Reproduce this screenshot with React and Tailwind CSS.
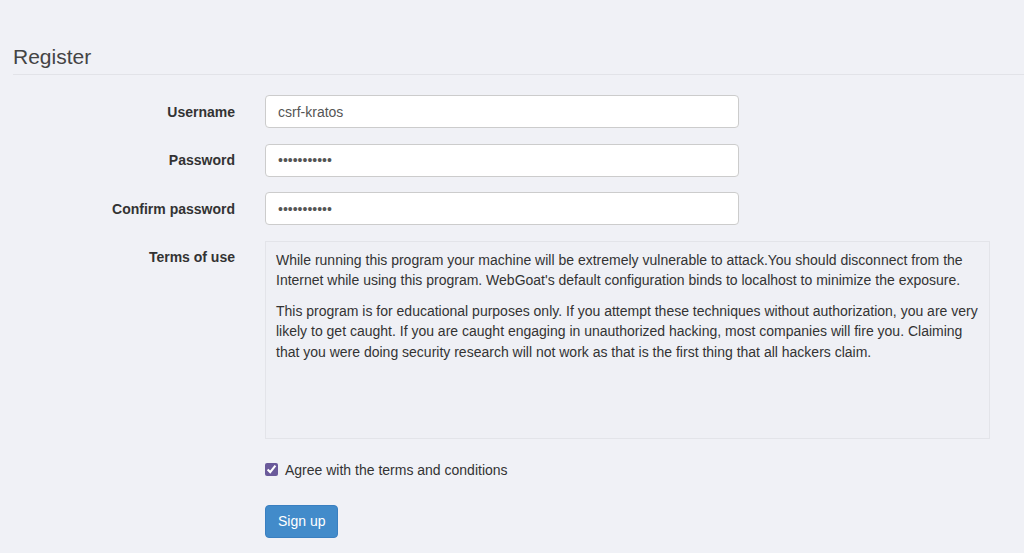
import React from "react";

const Row = ({ label, children, top = false }) => (
  <div className={`flex ${top ? "items-start" : "items-center"} mb-[15.5px]`}>
    <label
      className={`w-[235px] shrink-0 text-right font-bold text-sm text-[#333] ${top ? "pt-[6px]" : ""}`}
    >
      {label}
    </label>
    <div className="ml-[30px]">{children}</div>
  </div>
);

const inputCls =
  "w-[474px] h-[33px] px-3 bg-white border border-[#ccc] rounded text-sm text-[#555] outline-none";

export default function App() {
  return (
    <div
      className="min-h-screen bg-[#f0f1f6] text-[#333] pt-[44px]"
      style={{ fontFamily: '"Liberation Sans", Arial, sans-serif' }}
    >
      <div className="ml-[13px]">
        <h2 className="text-[21px] text-[#444] leading-[26px] pb-[4px] border-b border-[#e2e3e8]">
          Register
        </h2>
      </div>

      <form className="mt-[20px]" onSubmit={(e) => e.preventDefault()}>
        <Row label="Username">
          <input className={inputCls} defaultValue="csrf-kratos" />
        </Row>
        <Row label="Password">
          <input className={inputCls} type="password" defaultValue="kratos12345" />
        </Row>
        <Row label="Confirm password">
          <input className={inputCls} type="password" defaultValue="kratos12345" />
        </Row>
        <Row label="Terms of use" top>
          <div className="w-[725px] h-[198px] border border-[#e3e4e9] bg-[#eff0f5] px-[10px] pt-[8px] text-sm leading-[20.5px] text-[#333]">
            <p className="mb-[10px]">
              While running this program your machine will be extremely vulnerable to
              attack.You should disconnect from the Internet while using this program.
              WebGoat's default configuration binds to localhost to minimize the exposure.
            </p>
            <p>
              This program is for educational purposes only. If you attempt these
              techniques without authorization, you are very likely to get caught. If you
              are caught engaging in unauthorized hacking, most companies will fire you.
              Claiming that you were doing security research will not work as that is the
              first thing that all hackers claim.
            </p>
          </div>
        </Row>

        <div className="ml-[265px] mt-[21px] flex items-center gap-[7px] text-sm text-[#333]">
          <input
            type="checkbox"
            defaultChecked
            className="w-[13px] h-[13px] accent-[#6a5a9a]"
          />
          <span>Agree with the terms and conditions</span>
        </div>

        <div className="ml-[265px] mt-[25px]">
          <button className="h-[33px] px-3 rounded bg-[#428bca] text-white text-sm border border-[#3a7fc0]">
            Sign up
          </button>
        </div>
      </form>
    </div>
  );
}
